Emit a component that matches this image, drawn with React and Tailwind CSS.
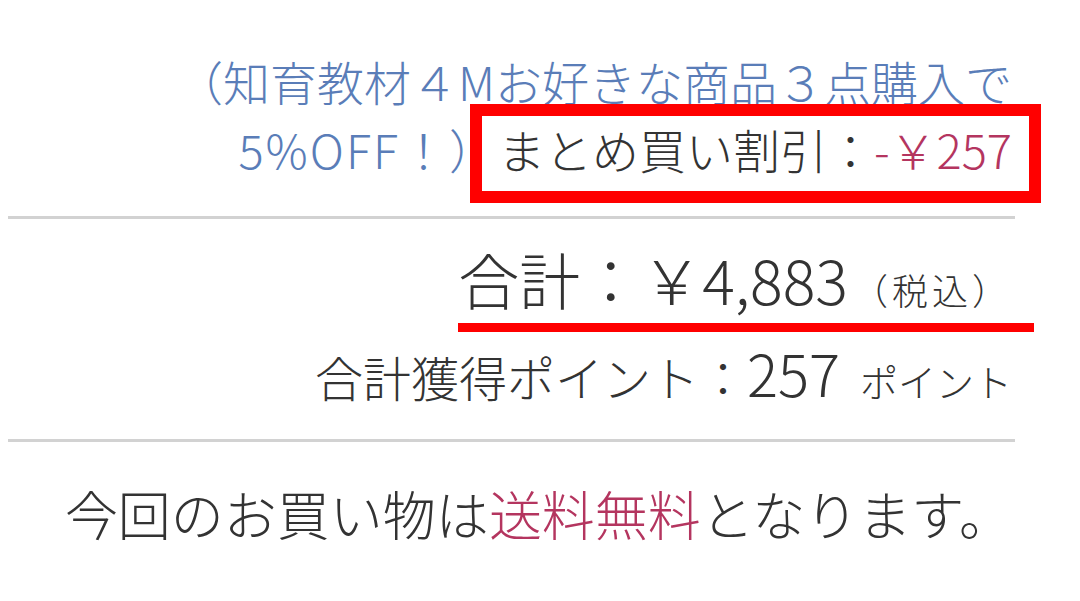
import React from 'react';

const font = { fontFamily: '"Noto Sans CJK JP", "Noto Sans", sans-serif' };

const Summary = () => {
  return (
    <div className="w-[1080px] h-[601px] bg-white text-[#333] font-light overflow-hidden" style={font}>
      <div className="w-[1007px] ml-[8px]">
        <div className="pt-[47px] pr-[3px] text-right text-[47px] leading-[68px] text-[#5a7db8]">
          <p>（知育教材４Mお好きな商品３点購入で</p>
          <p>
            <span className="tracking-[2px]">5%OFF！）</span>
            <span className="relative text-[#333]">
              まとめ買い割引：<span className="text-[#b4355f]">-￥257</span>
              <span className="absolute -left-[28px] -right-[29px] -top-[10px] -bottom-[20px] border-[12px] border-[#ff0000]" />
            </span>
          </p>
        </div>
        <div className="mt-[33px] h-[3px] bg-[#d2d2d2]" />
        <div className="flex justify-end pr-[3px] pt-[25px]">
          <div className="relative">
            <p className="text-[61px] leading-[70px]">
              合計：￥4,883<span className="ml-[4px] text-[36px] tracking-[4px]">（税込）</span>
            </p>
            <div className="absolute left-0 -right-[22px] -bottom-[8px] h-[9px] bg-[#ff0000]" />
          </div>
        </div>
        <p className="mt-[18px] pr-[3px] text-right text-[48px] leading-[60px]">
          合計獲得ポイント：<span className="text-[58px]">257</span>
          <span className="ml-[20px] text-[38px]">ポイント</span>
        </p>
        <div className="mt-[28px] h-[3px] bg-[#d2d2d2]" />
        <p className="mt-[36px] pr-[3px] text-right text-[53px] leading-[70px]">
          今回のお買い物は<span className="text-[#b4355f]">送料無料</span>となります。
        </p>
      </div>
    </div>
  );
};

export default function App() {
  return <Summary />;
}
